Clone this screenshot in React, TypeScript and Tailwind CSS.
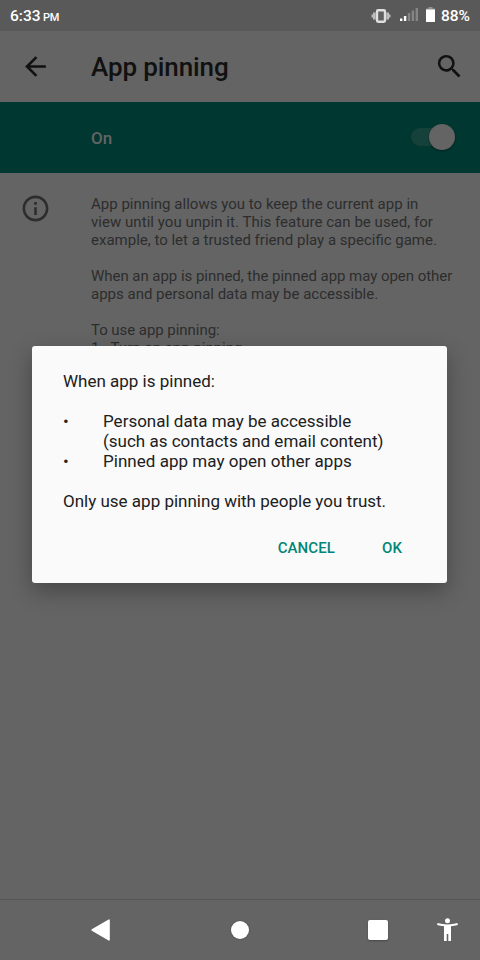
import type { ReactNode } from "react";

function Line({ children, className = "" }: { children?: ReactNode; className?: string }) {
  return <span className={`block whitespace-pre ${className}`}>{children}</span>;
}

function StatusBar() {
  return (
    <div className="flex h-[31px] shrink-0 items-center bg-[#595959] pl-[10px] pr-[10px] font-medium text-white">
      <span className="mt-px text-[15.5px] leading-[31px]">6:33</span>
      <span className="ml-[2.5px] mt-[4px] text-[11px] leading-[20px] tracking-[-0.4px]">PM</span>
      <svg className="ml-auto" width="20" height="14" viewBox="0 0 20 14">
        <path d="M.5 5.5H2v3H.5zM2 3.5h2.6v7H2zM15.4 3.5H18v7h-2.6zM18 5.5h1.5v3H18z" fill="#bdbdbd" />
        <rect x="6" y="1.2" width="8" height="11.6" rx="1.2" fill="#606060" stroke="#dedede" strokeWidth="2.4" />
      </svg>
      <svg className="mb-[2px] ml-[9px]" width="18" height="13" viewBox="0 0 18 13">
        <path d="M0 10.5h2.4V13H0zM3.9 8h2.4v5H3.9z" fill="#fff" />
        <path d="M7.8 5h2.4v8H7.8zM11.7 2.5h2.4V13h-2.4zM15.6 0H18v13h-2.4z" fill="#858585" />
      </svg>
      <svg className="mb-[2px] ml-[8px]" width="9" height="15" viewBox="0 0 9 15">
        <path d="M2.5 0h4v1.5H9V3H0V1.5h2.5z" fill="#929292" />
        <path d="M0 2.5h9V15H0z" fill="#fff" />
      </svg>
      <span className="ml-[6px] mt-px text-[15.5px] leading-[31px]">88%</span>
    </div>
  );
}

function AppBar() {
  return (
    <header className="flex h-[71px] shrink-0 items-center pl-5 pr-[15px] text-[#111]">
      <svg width="31" height="31" viewBox="0 0 24 24" fill="currentColor">
        <path d="M20 11H7.83l5.59-5.59L12 4l-8 8 8 8 1.41-1.41L7.83 13H20v-2z" />
      </svg>
      <h1 className="ml-[40px] whitespace-nowrap text-[26px] font-medium leading-[30px] tracking-[-0.1px]">App pinning</h1>
      <svg className="ml-auto" width="31" height="31" viewBox="0 0 24 24" fill="currentColor">
        <path d="M15.5 14h-.79l-.28-.27A6.471 6.471 0 0 0 16 9.5 6.5 6.5 0 1 0 9.5 16c1.61 0 3.09-.59 4.23-1.57l.27.28v.79l5 4.99L20.49 19l-4.99-5zm-6 0C7.01 14 5 11.99 5 9.5S7.01 5 9.5 5 14 7.01 14 9.5 11.99 14 9.5 14z" />
      </svg>
    </header>
  );
}

function SwitchBar() {
  return (
    <div className="flex h-[71px] shrink-0 items-center justify-between bg-[#003730] pl-[91px] pr-[25px]">
      <span className="text-[17px] font-medium leading-5 text-[#646464]">On</span>
      <div className="mb-px flex h-[18px] w-[44px] items-center justify-end rounded-full bg-[#16413b]">
        <span className="size-[26px] shrink-0 rounded-full bg-[#646464] shadow-[0_1px_2px_rgba(0,0,0,0.4)]" />
      </div>
    </div>
  );
}

function Description() {
  return (
    <section className="flex grow pl-[20px] pt-[20px]">
      <svg className="shrink-0" width="31" height="31" viewBox="0 0 24 24" fill="#2d2d2d">
        <path d="M11 7h2v2h-2zm0 4h2v6h-2zm1-9C6.48 2 2 6.48 2 12s4.48 10 10 10 10-4.48 10-10S17.52 2 12 2zm0 18c-4.41 0-8-3.59-8-8s3.59-8 8-8 8 3.59 8 8-3.59 8-8 8z" />
      </svg>
      <div className="ml-[40px] mt-[2px] text-[15px] leading-[18px] text-[#2d2d2d]">
        <Line className="tracking-[0.02px]">App pinning allows you to keep the current app in</Line>
        <Line className="tracking-[0.04px]">view until you unpin it. This feature can be used, for</Line>
        <Line>example, to let a trusted friend play a specific game.</Line>
        <Line className="mt-[18px] tracking-[-0.04px]">When an app is pinned, the pinned app may open other</Line>
        <Line>apps and personal data may be accessible.</Line>
        <Line className="mt-[18px] tracking-[-0.05px]">To use app pinning:</Line>
        <Line>1.  Turn on app pinning</Line>
      </div>
    </section>
  );
}

function NavBar() {
  return (
    <nav className="flex h-[61px] shrink-0 items-center border-t border-[#565656] bg-[#646464] pl-[91px] pr-[22px]">
      <svg width="19" height="23" viewBox="0 0 19 23">
        <path d="M1.2 11 18 1.100v19.800z" fill="#fff" stroke="#fff" strokeWidth="1.6" strokeLinejoin="round" />
      </svg>
      <span className="ml-[121px] size-[18px] rounded-full bg-white shadow-[0_0_2px_rgba(0,0,0,0.3)]" />
      <span className="ml-[119px] size-[20px] rounded-[2px] bg-white shadow-[0_1px_2px_rgba(0,0,0,0.3)]" />
      <svg className="mb-px ml-auto" width="21" height="24" viewBox="0 0 21 24" fill="#fff">
        <circle cx="10.5" cy="2.7" r="2.5" />
        <path d="M.6 5C3.6 5.900 7 6.400 10.500 6.400s6.900-.5 9.900-1.400l.5 2c-2.200.6-4.700 1-6.900 1.200V23h-2.700v-7H9.700v7H7V8.200C4.800 8 2.300 7.600.1 7z" />
      </svg>
    </nav>
  );
}

function PinDialog() {
  return (
    <div
      role="dialog"
      className="absolute left-[32px] top-[346px] flex h-[237px] w-[415px] flex-col rounded-[3px] bg-[#fafafa] pl-[31px] pr-[45px] pt-[25px] text-[17px] leading-5 text-[#202020] shadow-[0_8px_22px_rgba(0,0,0,0.3)]"
    >
      <p className="whitespace-nowrap">When app is pinned:</p>
      <ul className="mt-5">
        <li className="flex">
          <span className="w-10 shrink-0">•</span>
          <span>
            <Line>Personal data may be accessible</Line>
            <Line>(such as contacts and email content)</Line>
          </span>
        </li>
        <li className="flex">
          <span className="w-10 shrink-0">•</span>
          <Line className="tracking-[0.03px]">Pinned app may open other apps</Line>
        </li>
      </ul>
      <p className="mt-5 whitespace-nowrap">Only use app pinning with people you trust.</p>
      <div className="mt-[27px] flex justify-end gap-[47px] text-[15px] font-medium tracking-[0.1px] text-[#008577]">
        <button>CANCEL</button>
        <button>OK</button>
      </div>
    </div>
  );
}

export default function App() {
  return (
    <div className="relative flex h-[960px] w-[480px] flex-col overflow-hidden bg-[#646464] font-[Roboto,sans-serif]">
      <StatusBar />
      <AppBar />
      <SwitchBar />
      <Description />
      <NavBar />
      <PinDialog />
    </div>
  );
}
